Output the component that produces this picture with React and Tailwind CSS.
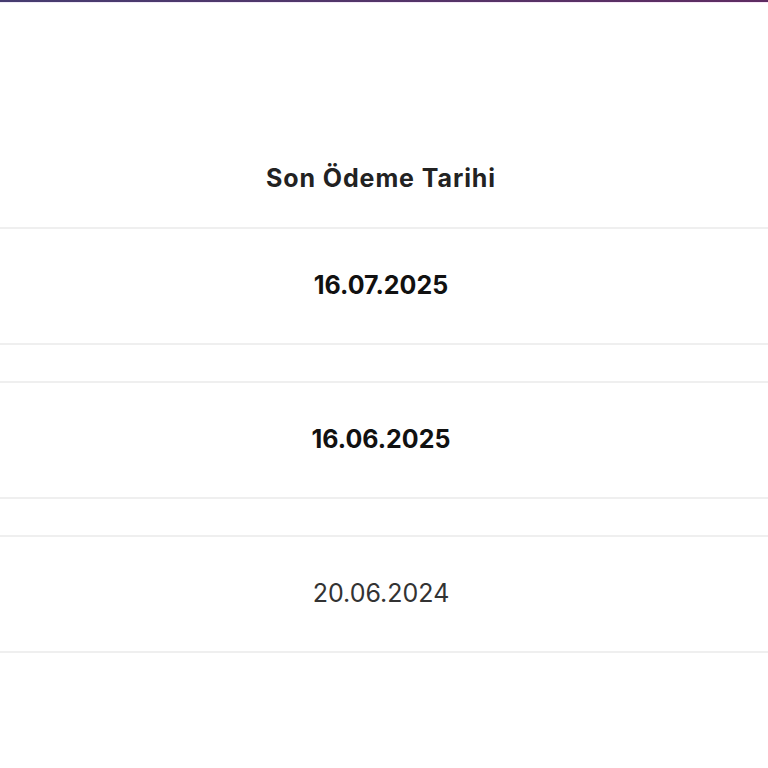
import React from 'react'

const ROWS = [
  { date: '16.07.2025', bold: true },
  { date: '16.06.2025', bold: true },
  { date: '20.06.2024', bold: false },
]

export default function App() {
  return (
    <div className="w-[768px] h-[768px] bg-white overflow-hidden" style={{ fontFamily: 'Inter, "Noto Sans", sans-serif' }}>
      <div className="h-[2px] bg-gradient-to-r from-[#463c70] to-[#5e2c62]" />
      <div className="h-[1px] bg-gradient-to-r from-[#efeaf7] to-[#f8e6f8]" />

      {/* table header */}
      <div className="h-[226px] pt-[128px] border-b-2 border-[#efefef]">
        <div className="h-[96px] flex items-center justify-center">
          <span className="text-[25px] font-bold text-[#222] mr-[6px] tracking-[0.9px]">Son Ödeme Tarihi</span>
        </div>
      </div>

      {ROWS.map((r, i) => (
        <div key={r.date}>
          {i > 0 && <div className="h-[38px] border-b-2 border-[#efefef]" />}
          <div className="h-[116px] flex items-center justify-center border-b-2 border-[#efefef]">
            <span className={`text-[25px] mr-[6px] ${r.bold ? 'font-bold text-[#111]' : 'font-normal text-[#333]'}`}>
              {r.date}
            </span>
          </div>
        </div>
      ))}
    </div>
  )
}
